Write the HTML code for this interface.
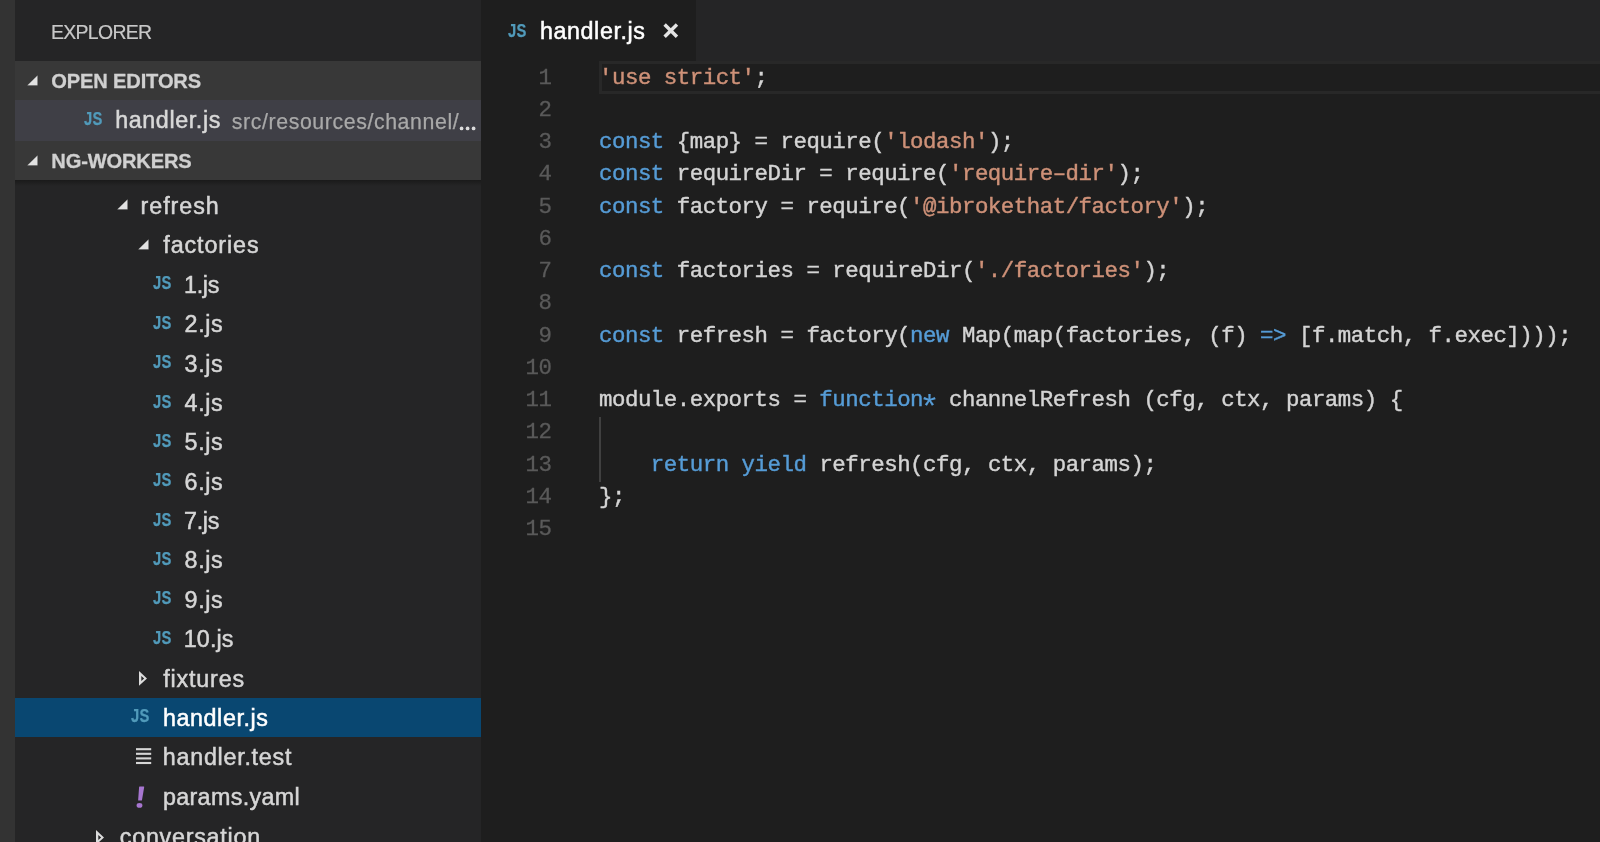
<!DOCTYPE html>
<html>
<head>
<meta charset="utf-8">
<title>handler.js - ng-workers</title>
<style>
html,body{margin:0;padding:0;}
body{will-change:transform;width:1600px;height:842px;overflow:hidden;background:#1e1e1e;position:relative;
  font-family:"Liberation Sans",sans-serif;color:#cccccc;}
*{box-sizing:border-box;}
#act{position:absolute;left:0;top:0;width:15px;height:842px;background:#333333;}
#side{position:absolute;left:15px;top:0;width:466px;height:842px;background:#252526;overflow:hidden;}
#title{position:absolute;left:36px;top:20px;font-size:19.4px;line-height:24px;letter-spacing:-0.65px;color:#c8c8c8;white-space:nowrap;-webkit-text-stroke:0.2px;}
.hdr{position:absolute;left:0;width:466px;height:39.5px;background:#383838;}
.hdr span{position:absolute;left:36.3px;top:8.1px;font-size:20.1px;line-height:24px;font-weight:bold;color:#d0d0d0;white-space:nowrap;letter-spacing:-0.15px;-webkit-text-stroke:0.3px;}
#oe{position:absolute;left:0;top:100.3px;width:466px;height:40.5px;background:#3f3f46;}
.row{position:absolute;left:0;width:466px;height:39.4px;white-space:nowrap;}
.t{position:absolute;top:5.4px;font-size:23.3px;line-height:28px;color:#d6d6d6;white-space:nowrap;-webkit-text-stroke:0.5px;}
#oe .t{left:100.2px;top:6.2px;color:#d8d8d8;letter-spacing:0.6px;}
#oe .d{position:absolute;left:216.8px;top:7.3px;font-size:21.3px;line-height:28px;color:#a9a9a9;white-space:nowrap;letter-spacing:0.6px;-webkit-text-stroke:0.25px;}
.js{position:absolute;font-weight:bold;font-size:18px;line-height:18px;color:#519aba;letter-spacing:0.4px;white-space:nowrap;transform:scaleX(0.82);transform-origin:0 0;-webkit-text-stroke:0.25px;}
.sel{background:#094771;height:39px;margin-top:-0.1px;}
.sel .t{margin-top:0.4px;}
.sel .t{color:#ffffff;}
.arr{position:absolute;}
#shadow{position:absolute;left:0;top:179.9px;width:466px;height:6px;background:linear-gradient(#1a1a1a,rgba(37,37,38,0));}
#tabs{position:absolute;left:481px;top:0;width:1119px;height:61.2px;background:#252526;}
#tab{position:absolute;left:0;top:0;width:215.3px;height:61.2px;background:#1e1e1e;}
#tab .t{left:58.9px;top:16.7px;color:#ffffff;letter-spacing:0.6px;}
#curline{position:absolute;left:599.1px;top:61.2px;width:1010px;height:33.1px;border:3.3px solid #282828;}
.ln{position:absolute;left:490px;width:61.5px;text-align:right;font-family:"Liberation Mono",monospace;font-size:22.4px;letter-spacing:-0.49px;line-height:32.25px;height:32.25px;color:#5a5a5a;white-space:pre;-webkit-text-stroke:0.3px #5a5a5a;}
.cl{position:absolute;left:599px;font-family:"Liberation Mono",monospace;font-size:22.4px;letter-spacing:-0.475px;line-height:32.25px;height:32.25px;color:#d4d4d4;white-space:pre;-webkit-text-stroke:0.42px;}
.k{color:#569cd6;}
.ast{display:inline-block;width:12.965px;letter-spacing:0;font-size:34px;line-height:10px;vertical-align:-12.2px;text-align:left;text-indent:-3.9px;-webkit-text-stroke:0.1px;}
.s{color:#ce9178;}
#guide{position:absolute;left:599px;top:417.4px;width:1.5px;height:64.3px;background:#404040;}
</style>
</head>
<body>
<div id="act"></div>
<div id="side">
<div id="title">EXPLORER</div>
<div class="hdr" style="top:61.2px;height:39.3px"><svg class="arr" style="left:12.4px;top:14.2px" width="12" height="12" viewBox="0 0 12 12"><path d="M10.6 0.2 L10.6 10.5 L0.1 10.5 Z" fill="#e2e2e2" stroke="#1c1c1c" stroke-opacity="0.35" stroke-width="0.6"/></svg><span>OPEN EDITORS</span></div>
<div id="oe"><span class="js" style="left:69px;top:9.4px">JS</span><span class="t">handler.js</span><span class="d">src/resources/channel/</span><svg class="arr" style="left:443.8px;top:25.5px" width="18" height="5" viewBox="0 0 18 5"><circle cx="2.55" cy="2.4" r="1.85" fill="#dcdcdc"/><circle cx="8.6" cy="2.4" r="1.85" fill="#dcdcdc"/><circle cx="14.6" cy="2.4" r="1.85" fill="#dcdcdc"/></svg></div>
<div class="hdr" style="top:140.8px;height:39.1px"><svg class="arr" style="left:12.4px;top:14.2px" width="12" height="12" viewBox="0 0 12 12"><path d="M10.6 0.2 L10.6 10.5 L0.1 10.5 Z" fill="#e2e2e2" stroke="#1c1c1c" stroke-opacity="0.35" stroke-width="0.6"/></svg><span>NG-WORKERS</span></div>
<div class="row" style="top:186.60px"><svg class="arr" style="left:102.3px;top:12.7px" width="12" height="12" viewBox="0 0 12 12"><path d="M10.6 0.2 L10.6 10.5 L0.1 10.5 Z" fill="#e2e2e2" stroke="#1c1c1c" stroke-opacity="0.35" stroke-width="0.6"/></svg><span class="t" style="left:125.5px;letter-spacing:0.97px">refresh</span></div>
<div class="row" style="top:225.98px"><svg class="arr" style="left:123.4px;top:12.7px" width="12" height="12" viewBox="0 0 12 12"><path d="M10.6 0.2 L10.6 10.5 L0.1 10.5 Z" fill="#e2e2e2" stroke="#1c1c1c" stroke-opacity="0.35" stroke-width="0.6"/></svg><span class="t" style="left:148.3px;letter-spacing:0.9px">factories</span></div>
<div class="row" style="top:265.36px"><span class="js" style="left:138px;top:9.0px">JS</span><span class="t" style="left:169px;letter-spacing:-0.3px">1.js</span></div>
<div class="row" style="top:304.74px"><span class="js" style="left:138px;top:9.0px">JS</span><span class="t" style="left:169.6px;letter-spacing:0.6px">2.js</span></div>
<div class="row" style="top:344.12px"><span class="js" style="left:138px;top:9.0px">JS</span><span class="t" style="left:169.6px;letter-spacing:0.6px">3.js</span></div>
<div class="row" style="top:383.50px"><span class="js" style="left:138px;top:9.0px">JS</span><span class="t" style="left:169.6px;letter-spacing:0.6px">4.js</span></div>
<div class="row" style="top:422.88px"><span class="js" style="left:138px;top:9.0px">JS</span><span class="t" style="left:169.6px;letter-spacing:0.6px">5.js</span></div>
<div class="row" style="top:462.26px"><span class="js" style="left:138px;top:9.0px">JS</span><span class="t" style="left:169.6px;letter-spacing:0.6px">6.js</span></div>
<div class="row" style="top:501.64px"><span class="js" style="left:138px;top:9.0px">JS</span><span class="t" style="left:169px;letter-spacing:-0.3px">7.js</span></div>
<div class="row" style="top:541.02px"><span class="js" style="left:138px;top:9.0px">JS</span><span class="t" style="left:169.6px;letter-spacing:0.6px">8.js</span></div>
<div class="row" style="top:580.40px"><span class="js" style="left:138px;top:9.0px">JS</span><span class="t" style="left:169.6px;letter-spacing:0.6px">9.js</span></div>
<div class="row" style="top:619.78px"><span class="js" style="left:138px;top:9.0px">JS</span><span class="t" style="left:168.7px;letter-spacing:0.15px">10.js</span></div>
<div class="row" style="top:659.16px"><svg class="arr" style="left:123.7px;top:11.74px" width="9" height="15" viewBox="0 0 9 15"><path d="M0 0 L8 7.4 L0 14.8 Z M2.3 4.9 L2.3 9.9 L5.1 7.4 Z" fill="#dcdcdc" fill-rule="evenodd"/></svg><span class="t" style="left:148.3px;letter-spacing:0.82px">fixtures</span></div>
<div class="row sel" style="top:698.54px"><span class="js" style="left:115.9px;top:9.0px">JS</span><span class="t" style="left:147.9px;letter-spacing:0.6px">handler.js</span></div>
<div class="row" style="top:737.92px"><svg class="arr" style="left:121.1px;top:9.78px" width="16" height="18" viewBox="0 0 16 18"><rect x="0" y="0.15" width="15.2" height="2.1" fill="#d6d6d6"/><rect x="0" y="4.75" width="15.2" height="2.1" fill="#d6d6d6"/><rect x="0" y="9.35" width="15.2" height="2.1" fill="#d6d6d6"/><rect x="0" y="13.95" width="15.2" height="2.1" fill="#d6d6d6"/></svg><span class="t" style="left:147.8px;letter-spacing:0.74px">handler.test</span></div>
<div class="row" style="top:777.90px"><svg class="arr" style="left:120px;top:8px" width="12" height="24" viewBox="0 0 12 24"><path d="M4.6 0.6 L8.8 0.6 Q9.3 0.6 9.2 1.1 L7 14 Q6.9 14.5 6.4 14.5 L3.6 14.5 Q3.1 14.5 3.15 14 L4.1 1.1 Q4.15 0.6 4.6 0.6 Z" fill="#a776d0"/><ellipse cx="4.5" cy="19.4" rx="2.9" ry="2.3" fill="#a776d0"/></svg><span class="t" style="left:147.9px;letter-spacing:0.35px">params.yaml</span></div>
<div class="row" style="top:817.98px"><svg class="arr" style="left:80.8px;top:11.74px" width="9" height="15" viewBox="0 0 9 15"><path d="M0 0 L8 7.4 L0 14.8 Z M2.3 4.9 L2.3 9.9 L5.1 7.4 Z" fill="#dcdcdc" fill-rule="evenodd"/></svg><span class="t" style="left:104.8px;letter-spacing:0.75px">conversation</span></div>
<div id="shadow"></div>
</div>
<div id="tabs"><div id="tab"><span class="js" style="left:27px;top:22.1px">JS</span><span class="t">handler.js</span><svg style="position:absolute;left:182px;top:23.3px" width="15.6" height="15.2" viewBox="0 0 16 16"><path d="M1.5 1.5 L14.5 14.5 M14.5 1.5 L1.5 14.5" stroke="#e4e4e4" stroke-width="3.6" fill="none"/></svg></div></div>
<div id="curline"></div>
<div id="guide"></div>
<div class="ln" style="top:61.80px">1</div><div class="cl" style="top:61.80px"><span class="s">'use strict'</span>;</div>
<div class="ln" style="top:94.03px">2</div><div class="cl" style="top:94.03px"></div>
<div class="ln" style="top:126.26px">3</div><div class="cl" style="top:126.26px"><span class="k">const</span> {map} = require(<span class="s">'lodash'</span>);</div>
<div class="ln" style="top:158.49px">4</div><div class="cl" style="top:158.49px"><span class="k">const</span> requireDir = require(<span class="s">'require&#8211;dir'</span>);</div>
<div class="ln" style="top:190.72px">5</div><div class="cl" style="top:190.72px"><span class="k">const</span> factory = require(<span class="s">'@ibrokethat/factory'</span>);</div>
<div class="ln" style="top:222.95px">6</div><div class="cl" style="top:222.95px"></div>
<div class="ln" style="top:255.18px">7</div><div class="cl" style="top:255.18px"><span class="k">const</span> factories = requireDir(<span class="s">'./factories'</span>);</div>
<div class="ln" style="top:287.41px">8</div><div class="cl" style="top:287.41px"></div>
<div class="ln" style="top:319.64px">9</div><div class="cl" style="top:319.64px"><span class="k">const</span> refresh = factory(<span class="k">new</span> Map(map(factories, (f) <span class="k">=&gt;</span> [f.match, f.exec])));</div>
<div class="ln" style="top:351.87px">10</div><div class="cl" style="top:351.87px"></div>
<div class="ln" style="top:384.10px">11</div><div class="cl" style="top:384.10px">module.exports = <span class="k">function<span class="ast">*</span></span> channelRefresh (cfg, ctx, params) {</div>
<div class="ln" style="top:416.33px">12</div><div class="cl" style="top:416.33px"></div>
<div class="ln" style="top:448.56px">13</div><div class="cl" style="top:448.56px">    <span class="k">return</span> <span class="k">yield</span> refresh(cfg, ctx, params);</div>
<div class="ln" style="top:480.79px">14</div><div class="cl" style="top:480.79px">};</div>
<div class="ln" style="top:513.02px">15</div><div class="cl" style="top:513.02px"></div>
</body>
</html>
